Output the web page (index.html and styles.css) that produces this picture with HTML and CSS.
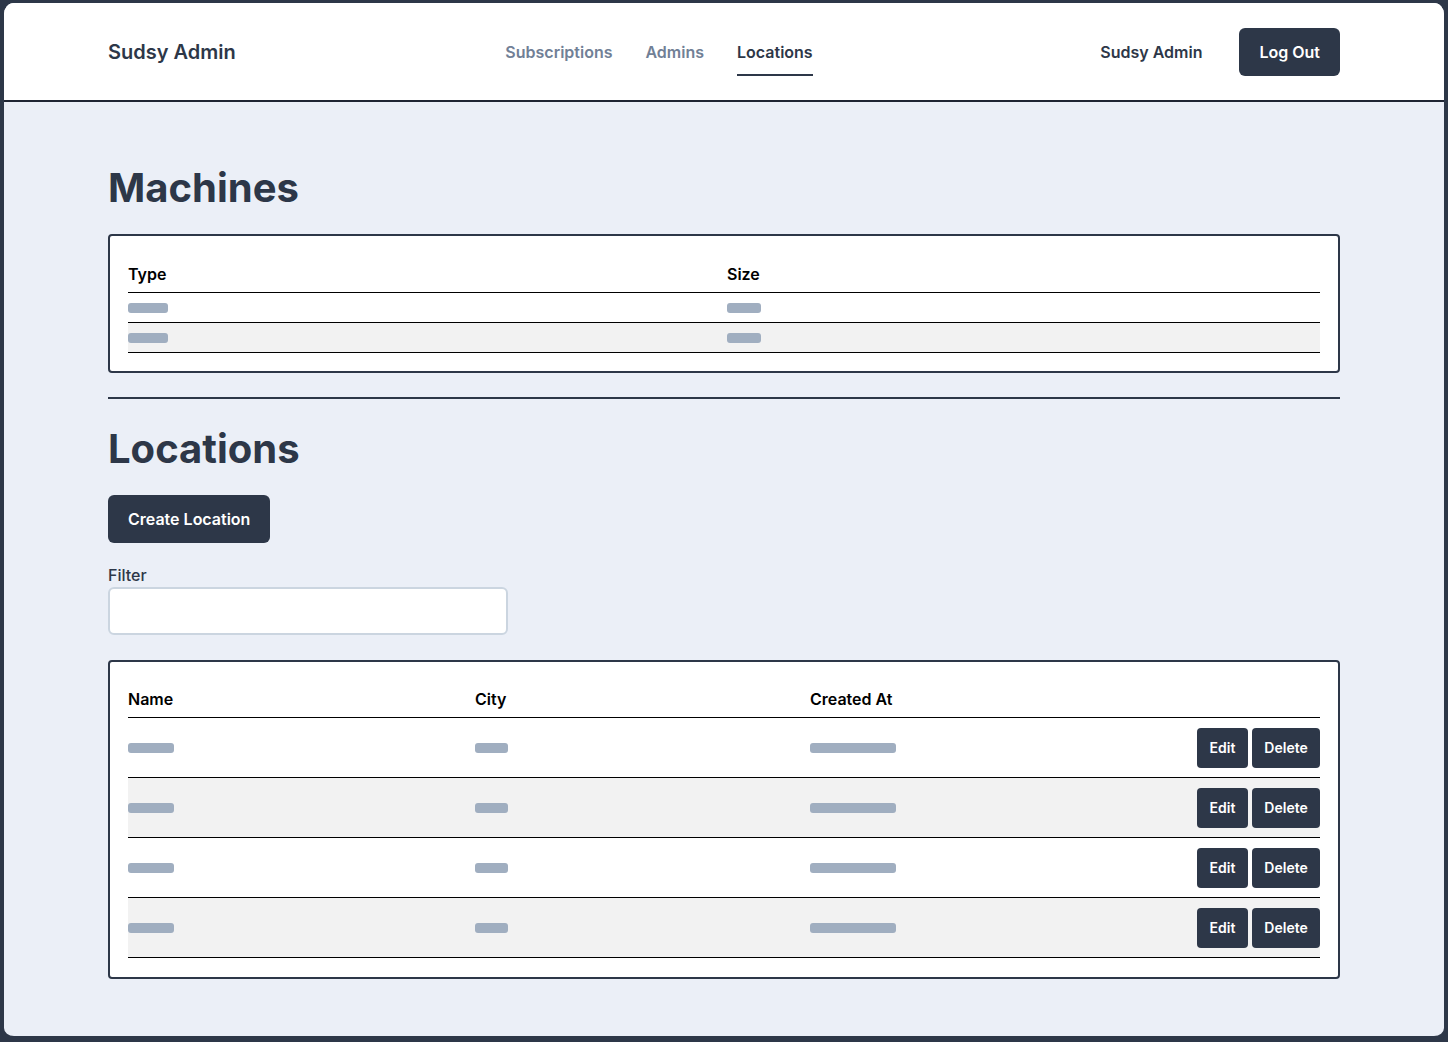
FILE: index.html
```html
<!DOCTYPE html>
<html>
<head>
<meta charset="utf-8">
<title>Sudsy Admin</title>
<link rel="stylesheet" href="styles.css">
</head>
<body>
<div class="frame">
  <header class="header">
    <div class="header-inner">
      <div class="logo">Sudsy Admin</div>
      <nav class="nav">
        <a class="nav-link">Subscriptions</a>
        <a class="nav-link">Admins</a>
        <a class="nav-link active">Locations</a>
      </nav>
      <div class="user">
        <span class="user-name">Sudsy Admin</span>
        <button class="btn btn-lg">Log Out</button>
      </div>
    </div>
  </header>
  <main class="main">
    <h1 class="title">Machines</h1>
    <div class="card card-machines">
      <table class="table table-machines">
        <colgroup><col class="c-type"><col></colgroup>
        <thead><tr><th>Type</th><th>Size</th></tr></thead>
        <tbody>
          <tr><td><span class="sk" style="width:40px"></span></td><td><span class="sk" style="width:34px"></span></td></tr>
          <tr><td><span class="sk" style="width:40px"></span></td><td><span class="sk" style="width:34px"></span></td></tr>
        </tbody>
      </table>
    </div>
    <hr class="divider">
    <h1 class="title">Locations</h1>
    <button class="btn btn-lg">Create Location</button>
    <label class="label" for="filter">Filter</label>
    <input id="filter" class="input" type="text">
    <div class="card card-locations">
      <table class="table table-locations">
        <colgroup><col class="c-name"><col class="c-city"><col class="c-created"><col></colgroup>
        <thead><tr><th>Name</th><th>City</th><th>Created At</th><th></th></tr></thead>
        <tbody>
          <tr><td><span class="sk" style="width:46px"></span></td><td><span class="sk" style="width:33px"></span></td><td><span class="sk" style="width:86px"></span></td><td class="actions"><button class="btn btn-sm">Edit</button><button class="btn btn-sm">Delete</button></td></tr>
          <tr><td><span class="sk" style="width:46px"></span></td><td><span class="sk" style="width:33px"></span></td><td><span class="sk" style="width:86px"></span></td><td class="actions"><button class="btn btn-sm">Edit</button><button class="btn btn-sm">Delete</button></td></tr>
          <tr><td><span class="sk" style="width:46px"></span></td><td><span class="sk" style="width:33px"></span></td><td><span class="sk" style="width:86px"></span></td><td class="actions"><button class="btn btn-sm">Edit</button><button class="btn btn-sm">Delete</button></td></tr>
          <tr><td><span class="sk" style="width:46px"></span></td><td><span class="sk" style="width:33px"></span></td><td><span class="sk" style="width:86px"></span></td><td class="actions"><button class="btn btn-sm">Edit</button><button class="btn btn-sm">Delete</button></td></tr>
        </tbody>
      </table>
    </div>
  </main>
</div>
</body>
</html>
```

FILE: styles.css
```css
* { box-sizing: border-box; }
html, body { margin: 0; padding: 0; }
body {
  font-family: Inter, "Liberation Sans", sans-serif;
  color: #2d3748;
  background: #2d3748;
}
.frame {
  width: 1448px;
  height: 1042px;
  border: 4px solid #2d3748;
  border-top-width: 3px;
  border-bottom-width: 6px;
  border-radius: 14px;
  background: #ebeff7;
  overflow: hidden;
}
.header {
  background: #fff;
  height: 99px;
  border-bottom: 2px solid #1f2533;
}
.header-inner {
  width: 1232px;
  margin: 0 auto;
  height: 97px;
  display: flex;
  align-items: center;
  justify-content: space-between;
}
.logo {
  font-size: 20px;
  font-weight: 600;
  line-height: 28px;
  color: #2d3748;
}
.nav {
  display: flex;
  gap: 33px;
  margin-right: 18px;
}
.nav-link {
  font-size: 16px;
  font-weight: 600;
  line-height: 24px;
  color: #718096;
  padding: 12px 0 10px;
  border-bottom: 2px solid transparent;
}
.nav-link.active {
  color: #2d3748;
  border-bottom-color: #2d3748;
}
.user {
  display: flex;
  align-items: center;
  gap: 37px;
}
.user-name {
  font-size: 16px;
  font-weight: 600;
  line-height: 24px;
}
.btn {
  font-family: inherit;
  background: #2d3748;
  color: #fff;
  border: none;
  font-weight: 600;
  cursor: pointer;
}
.btn-lg {
  height: 48px;
  padding: 0 20px;
  font-size: 16px;
  line-height: 24px;
  border-radius: 6px;
}
.btn-sm {
  height: 40px;
  padding: 0 12.5px;
  font-size: 14px;
  border-radius: 4px;
}
.main {
  width: 1232px;
  margin: 0 auto;
  padding-top: 60px;
  display: flex;
  flex-direction: column;
  align-items: flex-start;
}
.title {
  margin: 2px 0 22px;
  font-size: 40px;
  line-height: 48px;
  font-weight: 700;
  color: #2d3748;
}
.card {
  width: 100%;
  background: #fff;
  border: 2px solid #2d3748;
  border-radius: 4px;
  padding: 18px 18px 19px;
}
.card-machines { padding-bottom: 18px; }
.divider {
  width: 100%;
  margin: 24px 0 24px;
  border: none;
  border-top: 2px solid #2d3748;
}
.table {
  width: 100%;
  border-collapse: collapse;
  table-layout: fixed;
}
.table th {
  text-align: left;
  font-size: 16px;
  font-weight: 600;
  line-height: 24px;
  color: #000;
  padding: 7px 0 6px;
  border-bottom: 1px solid #000;
}
.table-machines th { padding-top: 8px; }
.table td {
  padding: 0;
  border-bottom: 1px solid #000;
  vertical-align: middle;
}
.table tbody tr:nth-child(even) td { background: #f2f2f2; }
.table-machines td { height: 30px; }
.table-locations td { height: 60px; }
.c-type { width: 599px; }
.c-name { width: 347px; }
.c-city { width: 335px; }
.c-created { width: 387px; }
.sk {
  display: block;
  height: 10px;
  border-radius: 3px;
  background: #a0aec0;
}
.actions {
  text-align: right;
  white-space: nowrap;
  font-size: 0;
}
.actions .btn + .btn { margin-left: 4px; }
.label {
  margin-top: 20px;
  font-size: 16px;
  font-weight: 500;
  line-height: 24px;
  color: #2d3748;
}
.input {
  width: 400px;
  height: 48px;
  border: 2px solid #cbd5e0;
  border-radius: 6px;
  background: #fff;
  margin-bottom: 25px;
  font-family: inherit;
  font-size: 16px;
}
```
